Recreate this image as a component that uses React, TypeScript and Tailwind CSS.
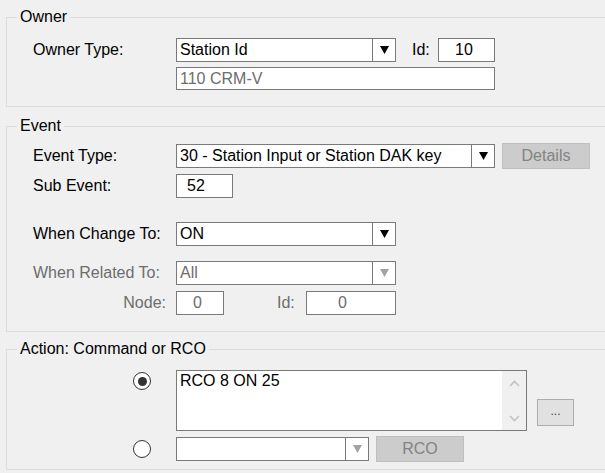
import React from "react";

function Arrow({ disabled }: { disabled?: boolean }) {
  return (
    <svg width="9" height="8" viewBox="0 0 9 8">
      <polygon points="0,0 9,0 4.5,8" fill={disabled ? "#a3a3a3" : "#000000"} />
    </svg>
  );
}

function Combo({
  className,
  text,
  disabled,
}: {
  className: string;
  text: string;
  disabled?: boolean;
}) {
  return (
    <div className={`flex h-[24px] border border-[#7a7a7a] bg-white ${className}`}>
      <div
        className={`flex-1 pl-[3px] leading-[22px] whitespace-nowrap overflow-hidden ${
          disabled ? "text-[#6d6d6d]" : "text-black"
        }`}
      >
        {text}
      </div>
      <div className="flex w-[23px] items-center justify-center border-l border-[#7a7a7a]">
        <Arrow disabled={disabled} />
      </div>
    </div>
  );
}

function DisabledButton({ className, text }: { className: string; text: string }) {
  return (
    <div
      className={`flex h-[26px] items-center justify-center border border-[#bfbfbf] bg-[#cccccc] text-[#838383] ${className}`}
    >
      {text}
    </div>
  );
}

function Group({
  title,
  className,
  children,
}: {
  title: string;
  className: string;
  children: React.ReactNode;
}) {
  return (
    <div className={`relative ml-[6px] w-[660px] border border-[#dcdcdc] ${className}`}>
      <span className="absolute left-[10px] top-[-10px] bg-[#f0f0f0] px-[3px] leading-[18px] text-black">
        {title}
      </span>
      {children}
    </div>
  );
}

function Radio({ checked }: { checked?: boolean }) {
  return (
    <div className="flex h-[18px] w-[18px] items-center justify-center rounded-full border-[1.5px] border-[#333333] bg-white">
      {checked && <div className="h-[9px] w-[9px] rounded-full bg-[#333333]" />}
    </div>
  );
}

export default function App() {
  return (
    <div className="h-[473px] w-[605px] overflow-hidden bg-[#f0f0f0] pt-[17px] font-['Liberation_Sans',Arial,sans-serif] text-[16px] text-black">
      {/* Owner */}
      <Group title="Owner" className="pt-[20px] pb-[16px] pl-[26px]">
        <div className="flex items-center">
          <div className="w-[143px]">Owner Type:</div>
          <Combo className="w-[220px]" text="Station Id" />
          <div className="w-[26px] pl-[16px] box-content">Id:</div>
          <div className="h-[24px] w-[57px] border border-[#7a7a7a] bg-white pl-[16px] leading-[22px]">
            10
          </div>
        </div>
        <div className="mt-[5px] ml-[143px] h-[23px] w-[319px] border border-[#7a7a7a] bg-white pl-[3px] leading-[21px] text-[#6d6d6d]">
          110 CRM-V
        </div>
      </Group>

      {/* Event */}
      <Group title="Event" className="mt-[19px] pt-[16px] pb-[16px] pl-[26px]">
        <div className="flex items-center">
          <div className="w-[143px]">Event Type:</div>
          <Combo className="w-[319px]" text="30 - Station Input or Station DAK key" />
          <DisabledButton className="ml-[7px] w-[88px]" text="Details" />
        </div>
        <div className="mt-[5px] flex items-center">
          <div className="w-[143px]">Sub Event:</div>
          <div className="h-[24px] w-[57px] border border-[#7a7a7a] bg-white pl-[10px] leading-[22px]">
            52
          </div>
        </div>
        <div className="mt-[24px] flex items-center">
          <div className="w-[143px]">When Change To:</div>
          <Combo className="w-[220px]" text="ON" />
        </div>
        <div className="mt-[15px] flex items-center">
          <div className="w-[143px] text-[#6d6d6d]">When Related To:</div>
          <Combo className="w-[220px]" text="All" disabled />
        </div>
        <div className="mt-[6px] flex items-center text-[#6d6d6d]">
          <div className="w-[143px] pr-[10px] text-right">Node:</div>
          <div className="h-[24px] w-[48px] border border-[#7a7a7a] bg-white pl-[16px] leading-[22px]">
            0
          </div>
          <div className="w-[82px] pl-[53px]">Id:</div>
          <div className="h-[24px] w-[90px] border border-[#7a7a7a] bg-white pl-[31px] leading-[22px]">
            0
          </div>
        </div>
      </Group>

      {/* Action */}
      <Group title="Action: Command or RCO" className="mt-[17px] pt-[20px] pb-[7px] pl-[26px]">
        <div className="flex items-start">
          <div className="flex w-[143px] justify-end pr-[25px] pt-[2px]">
            <Radio checked />
          </div>
          <div className="flex h-[61px] w-[351px] border border-[#7a7a7a] bg-white">
            <div className="flex-1 pl-[3px] leading-[20px]">RCO 8 ON 25</div>
            <div className="flex w-[24px] flex-col items-center justify-between bg-[#f0f0f0] pt-[9px] pb-[8px]">
              <svg width="11" height="7" viewBox="0 0 11 7">
                <polyline points="1,6 5.5,1.5 10,6" fill="none" stroke="#c2c2c2" strokeWidth="1.6" />
              </svg>
              <svg width="11" height="7" viewBox="0 0 11 7">
                <polyline points="1,1 5.5,5.5 10,1" fill="none" stroke="#c2c2c2" strokeWidth="1.6" />
              </svg>
            </div>
          </div>
          <div className="mt-[29px] ml-[10px] flex h-[27px] w-[37px] items-center justify-center border border-[#adadad] bg-[#e1e1e1] pb-[4px] text-[12px] text-[#444444]">
            ...
          </div>
        </div>
        <div className="mt-[5px] flex items-center">
          <div className="flex w-[143px] justify-end pr-[25px]">
            <Radio />
          </div>
          <Combo className="w-[193px]" text="" disabled />
          <DisabledButton className="ml-[7px] w-[88px]" text="RCO" />
        </div>
      </Group>
    </div>
  );
}
